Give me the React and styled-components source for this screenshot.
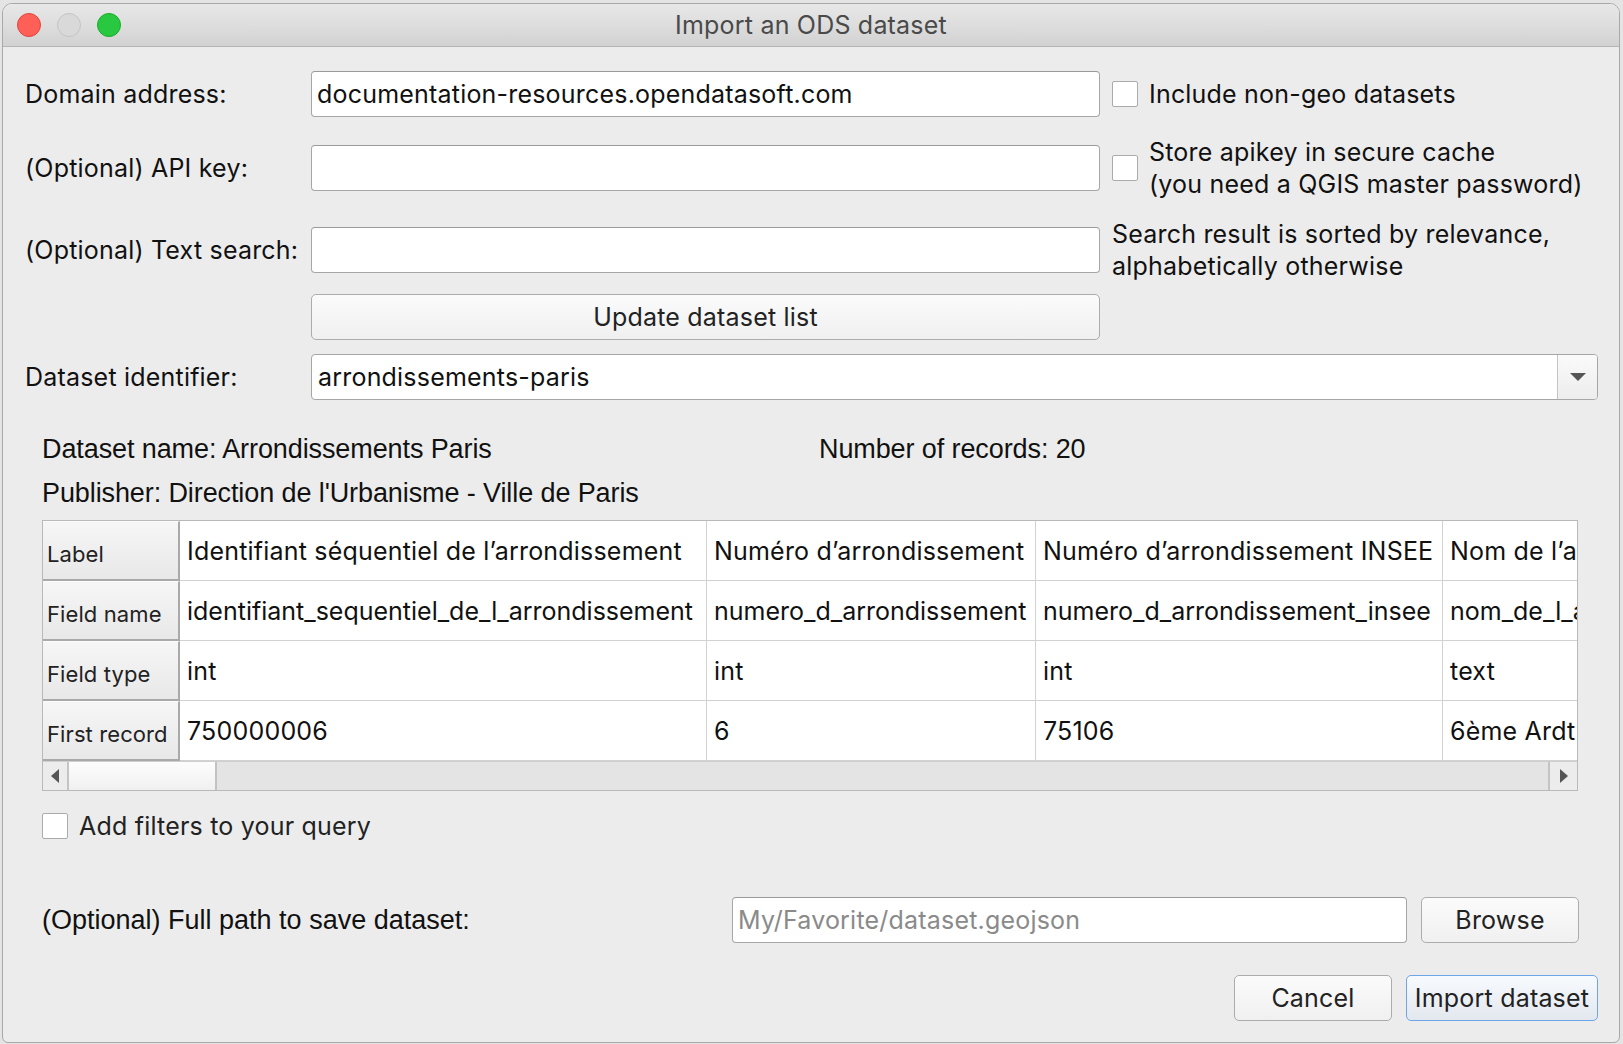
import React from "react";
import styled, { createGlobalStyle } from "styled-components";

const Global = createGlobalStyle`
  html, body { margin: 0; padding: 0; }
  body {
    background: #e4e4e4;
    font-family: Inter, "Noto Sans", sans-serif;
    color: #111;
    -webkit-font-smoothing: antialiased;
  }
  * { box-sizing: border-box; }
`;

const Window = styled.div`
  margin: 3px 3px 0 2px;
  width: 1618px;
  height: 1040px;
  border: 1px solid #a9a9a9;
  border-radius: 10px 10px 6px 6px;
  background: #ececec;
  overflow: hidden;
  display: flex;
  flex-direction: column;
`;

const TitleBar = styled.div`
  height: 43px;
  flex: none;
  display: flex;
  align-items: center;
  position: relative;
  background: linear-gradient(#e8e8e8, #d2d2d2);
  border-bottom: 1px solid #b4b4b4;
`;

const Lights = styled.div`
  position: absolute;
  left: 14px;
  top: 9px;
  display: flex;
  gap: 16px;
`;

const Light = styled.span`
  width: 24px;
  height: 24px;
  border-radius: 50%;
  background: ${(p) => p.$c};
  border: 1px solid ${(p) => p.$b};
`;

const Title = styled.div`
  flex: 1;
  text-align: center;
  font-size: 25px;
  color: #4a4a4a;
  letter-spacing: 0.2px;
`;

const Body = styled.div`
  flex: 1;
  padding: 24px 21px 0 22px;
  display: flex;
  flex-direction: column;
  font-size: 25px;
  letter-spacing: 0.2px;
`;

const FormRow = styled.div`
  display: grid;
  grid-template-columns: 286px 789px 1fr;
  grid-template-rows: 46px;
  align-items: center;
  margin-top: ${(p) => p.$mt || 0}px;
`;

const ComboRow = styled.div`
  display: grid;
  grid-template-columns: 286px 1fr;
  grid-template-rows: 46px;
  align-items: center;
  margin-top: ${(p) => p.$mt || 0}px;
`;

const Label = styled.div`
  white-space: nowrap;
  color: #111;
`;

const Input = styled.div`
  height: 46px;
  background: #fff;
  border: 1px solid #a6a6a6;
  border-top-color: #9a9a9a;
  border-radius: 4px;
  padding: 0 5px;
  display: flex;
  align-items: center;
  color: ${(p) => (p.$placeholder ? "#8a8a8a" : "#111")};
  white-space: nowrap;
  overflow: hidden;
  width: ${(p) => (p.$w ? p.$w + "px" : "auto")};
`;

const Side = styled.div`
  height: 46px;
  padding-left: 12px;
  display: flex;
  align-items: center;
  gap: 11px;
  line-height: 32px;
  white-space: nowrap;
`;

const Box = styled.span`
  flex: none;
  width: 26px;
  height: 26px;
  background: #fff;
  border: 1px solid #ababab;
  border-radius: 2px;
`;

const Button = styled.div`
  height: 46px;
  width: ${(p) => (p.$w ? p.$w + "px" : "auto")};
  border: 1px solid ${(p) => (p.$primary ? "#6da6e8" : "#acacac")};
  border-radius: 5px;
  background: ${(p) =>
    p.$primary
      ? "linear-gradient(#f7fafd, #e3e8ef)"
      : "linear-gradient(#fbfbfb, #f0f0f0)"};
  display: flex;
  align-items: center;
  justify-content: center;
  color: #222;
  white-space: nowrap;
`;

const Combo = styled.div`
  height: 46px;
  background: #fff;
  border: 1px solid #a6a6a6;
  border-radius: 4px;
  display: flex;
  overflow: hidden;
`;

const ComboText = styled.div`
  flex: 1;
  padding-left: 6px;
  display: flex;
  align-items: center;
`;

const ComboArrow = styled.div`
  width: 40px;
  border-left: 1px solid #c4c4c4;
  background: linear-gradient(#fafafa, #ededed);
  display: flex;
  align-items: center;
  justify-content: center;
`;

const Section = styled.div`
  padding: 0 19px 0 17px;
  display: flex;
  flex-direction: column;
`;

const InfoGrid = styled.div`
  margin-top: 27px;
  display: grid;
  grid-template-columns: 777px 1fr;
  grid-auto-rows: 44px;
  align-items: center;
  font-family: "Liberation Sans", Arial, sans-serif;
  font-size: 27px;
  letter-spacing: -0.1px;
  color: #111;
`;

const Table = styled.div`
  margin-top: 5px;
  width: 1536px;
  border: 1px solid #b9b9b9;
  background: #fff;
  overflow: hidden;
`;

const Grid = styled.div`
  display: grid;
  grid-template-columns: 137px 527px 329px 407px 300px;
  grid-auto-rows: 60px;
`;

const HeadCell = styled.div`
  background: linear-gradient(#f6f6f6, #e8e8e8);
  border-right: 2px solid #a9a9a9;
  border-bottom: 2px solid #a9a9a9;
  border-top: 1px solid #fbfbfb;
  display: flex;
  align-items: center;
  padding: 6px 0 0 4px;
  font-size: 22px;
  letter-spacing: 0.1px;
  color: #222;
  white-space: nowrap;
`;

const Cell = styled.div`
  border-right: 1px solid #d2d2d2;
  border-bottom: 1px solid #d2d2d2;
  display: flex;
  align-items: center;
  padding-left: 7px;
  color: #111;
  white-space: nowrap;
  overflow: hidden;
  letter-spacing: ${(p) => (p.$tight ? "0" : "0.2px")};
`;

const ScrollBar = styled.div`
  height: 29px;
  display: flex;
  background: #e4e4e4;
  border-top: 1px solid #cfcfcf;
`;

const ScrollBtn = styled.div`
  width: ${(p) => p.$w}px;
  flex: none;
  display: flex;
  align-items: center;
  justify-content: center;
  background: #ececec;
  border-${(p) => (p.$right ? "left" : "right")}: 2px solid #c4c4c4;
`;

const Thumb = styled.div`
  width: 148px;
  flex: none;
  background: linear-gradient(#fdfdfd, #f0f0f0);
  border-right: 2px solid #c2c2c2;
`;

const Track = styled.div`
  flex: 1;
`;

const CheckRow = styled.label`
  margin-top: 21px;
  display: flex;
  align-items: center;
  gap: 11px;
  color: #222;
  height: 27px;
`;

const PathRow = styled.div`
  margin-top: 58px;
  display: flex;
  align-items: center;
  gap: 14px;
`;

const PathLabel = styled.div`
  flex: 1;
  font-family: "Liberation Sans", Arial, sans-serif;
  font-size: 27px;
  letter-spacing: 0;
  color: #111;
`;

const Footer = styled.div`
  margin-top: 32px;
  display: flex;
  justify-content: flex-end;
  gap: 14px;
`;

const Tri = ({ dir }) => {
  const pts =
    dir === "left"
      ? "9,1 9,15 1,8"
      : dir === "right"
      ? "1,1 1,15 9,8"
      : "1,1 17,1 9,9";
  const w = dir === "down" ? 18 : 10;
  const h = dir === "down" ? 10 : 16;
  return (
    <svg width={w} height={h} viewBox={`0 0 ${w} ${h}`}>
      <polygon points={pts} fill="#555" />
    </svg>
  );
};

const heads = ["Label", "Field name", "Field type", "First record"];
const cols = [
  [
    "Identifiant séquentiel de l’arrondissement",
    "identifiant_sequentiel_de_l_arrondissement",
    "int",
    "750000006",
  ],
  ["Numéro d’arrondissement", "numero_d_arrondissement", "int", "6"],
  [
    "Numéro d’arrondissement INSEE",
    "numero_d_arrondissement_insee",
    "int",
    "75106",
  ],
  ["Nom de l’arrondissement", "nom_de_l_arrondissement", "text", "6ème Ardt"],
];

export default function App() {
  return (
    <>
      <Global />
      <Window>
        <TitleBar>
          <Lights>
            <Light $c="#fe5f57" $b="#e0443e" />
            <Light $c="#d9d9d9" $b="#c4c4c4" />
            <Light $c="#28c840" $b="#1aab29" />
          </Lights>
          <Title>Import an ODS dataset</Title>
        </TitleBar>
        <Body>
          <FormRow>
            <Label>Domain address:</Label>
            <Input>documentation-resources.opendatasoft.com</Input>
            <Side>
              <Box />
              <span>Include non-geo datasets</span>
            </Side>
          </FormRow>
          <FormRow $mt={28}>
            <Label>(Optional) API key:</Label>
            <Input />
            <Side>
              <Box />
              <span>
                Store apikey in secure cache
                <br />
                (you need a QGIS master password)
              </span>
            </Side>
          </FormRow>
          <FormRow $mt={36}>
            <Label>(Optional) Text search:</Label>
            <Input />
            <Side>
              <span>
                Search result is sorted by relevance,
                <br />
                alphabetically otherwise
              </span>
            </Side>
          </FormRow>
          <FormRow $mt={21}>
            <span />
            <Button>Update dataset list</Button>
            <span />
          </FormRow>
          <ComboRow $mt={14}>
            <Label>Dataset identifier:</Label>
            <Combo>
              <ComboText>arrondissements-paris</ComboText>
              <ComboArrow>
                <Tri dir="down" />
              </ComboArrow>
            </Combo>
          </ComboRow>

          <Section>
            <InfoGrid>
              <span>Dataset name: Arrondissements Paris</span>
              <span>Number of records: 20</span>
              <span>Publisher: Direction de l'Urbanisme - Ville de Paris</span>
            </InfoGrid>
            <Table>
              <Grid>
                {heads.map((h, r) => (
                  <React.Fragment key={h}>
                    <HeadCell>{h}</HeadCell>
                    {cols.map((c, i) => (
                      <Cell key={i} $tight={r === 1}>
                        {c[r]}
                      </Cell>
                    ))}
                  </React.Fragment>
                ))}
              </Grid>
              <ScrollBar>
                <ScrollBtn $w={26}>
                  <Tri dir="left" />
                </ScrollBtn>
                <Thumb />
                <Track />
                <ScrollBtn $w={29} $right>
                  <Tri dir="right" />
                </ScrollBtn>
              </ScrollBar>
            </Table>
            <CheckRow>
              <Box />
              <span>Add filters to your query</span>
            </CheckRow>
            <PathRow>
              <PathLabel>(Optional) Full path to save dataset:</PathLabel>
              <Input $w={675} $placeholder>
                My/Favorite/dataset.geojson
              </Input>
              <Button $w={158}>Browse</Button>
            </PathRow>
          </Section>
          <Footer>
            <Button $w={158}>Cancel</Button>
            <Button $w={192} $primary>
              Import dataset
            </Button>
          </Footer>
        </Body>
      </Window>
    </>
  );
}
